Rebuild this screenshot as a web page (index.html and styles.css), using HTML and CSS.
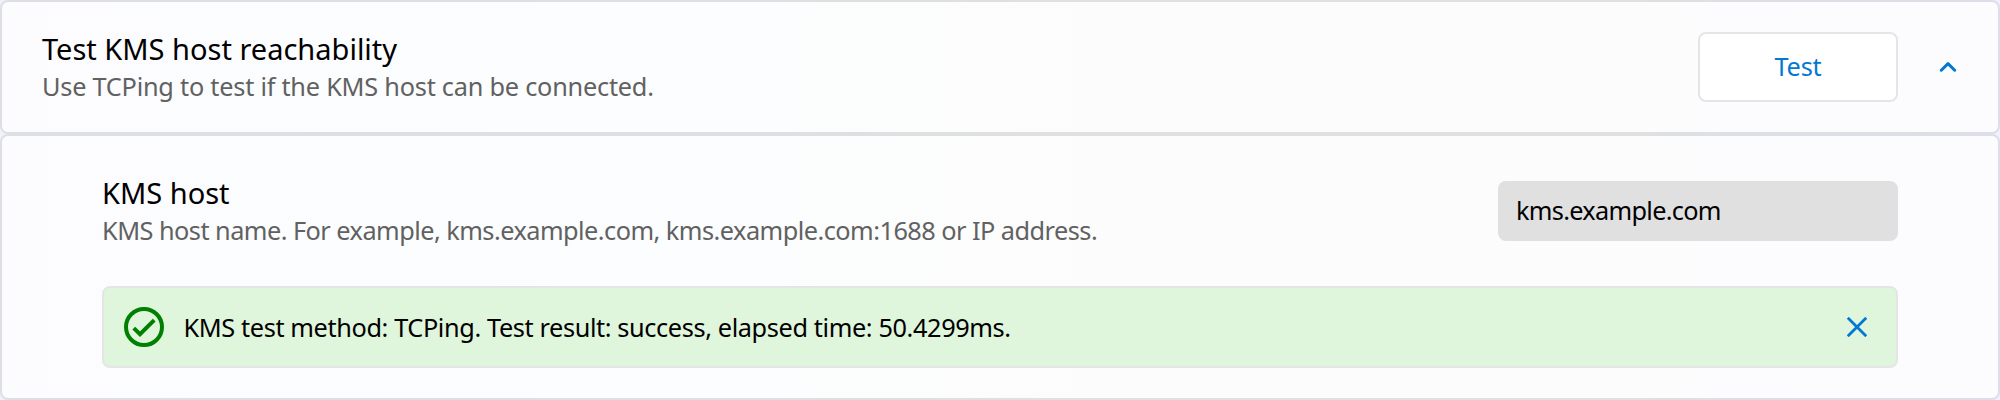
FILE: index.html
```
<!DOCTYPE html>
<html lang="en">
<head>
<meta charset="utf-8">
<title>Test KMS host reachability</title>
<link rel="stylesheet" href="styles.css">
</head>
<body>
<main class="page">
  <section class="card card-header">
    <div class="text">
      <h1 class="title">Test KMS host reachability</h1>
      <p class="description">Use TCPing to test if the KMS host can be connected.</p>
    </div>
    <button class="test-button" type="button">Test</button>
    <button class="expander" type="button" aria-label="Collapse">
      <svg width="20" height="14" viewBox="0 0 20 14"><path d="M3.3 10.2 10 3.6l6.7 6.6" fill="none" stroke="#0078d4" stroke-width="3" stroke-linecap="round" stroke-linejoin="round"/></svg>
    </button>
  </section>
  <section class="card card-body">
    <div class="row">
      <div class="text">
        <h2 class="title">KMS host</h2>
        <p class="description host-description">KMS host name. For example, kms.example.com, kms.example.com:1688 or IP address.</p>
      </div>
      <div class="host-input">kms.example.com</div>
    </div>
    <div class="info-bar">
      <svg width="40" height="40" viewBox="0 0 40 40" fill="none" stroke="#008000"><circle cx="20" cy="20" r="18" stroke-width="4"/><path d="M9.8 21.1 16 27.2 30.2 13.1" stroke-width="4"/></svg>
      <span class="message">KMS test method: TCPing. Test result: success, elapsed time: 50.4299ms.</span>
      <button class="close" type="button" aria-label="Close">
        <svg width="20" height="20" viewBox="0 0 20 20"><path d="M.8.8 19.2 19.2M19.2.8.8 19.2" fill="none" stroke="#0078d4" stroke-width="2.8"/></svg>
      </button>
    </div>
  </section>
</main>
</body>
</html>
```
FILE: styles.css
```
* { box-sizing: border-box; }
body {
  margin: 0;
  font-family: "Noto Sans", "Open Sans", sans-serif;
  font-size: 25.3px;
  color: #000;
}
.page {
  height: 400px;
  display: grid;
  grid-template-rows: 134px 266px;
  background: linear-gradient(90deg, #eff3f9, #eef4f9 35%, #f3f3f3 55%, #f3f3f3 75%, #eff3f9 88%, #f0f1fb);
}
.card {
  border: 2px solid rgba(0, 0, 0, 0.08);
  border-radius: 8px;
  background: rgba(255, 255, 255, 0.77) padding-box;
}
.card-header {
  display: flex;
  align-items: center;
  padding: 0 39.5px 0 40px;
}
.text { flex: 1; }
.title {
  margin: 0;
  font-size: 29px;
  line-height: 38px;
  font-weight: 400;
}
.description {
  margin: 0;
  line-height: 36px;
  letter-spacing: -0.235px;
  color: #616161;
  white-space: nowrap;
}
.host-description { letter-spacing: -0.53px; }
button {
  padding: 0;
  border: 0;
  background: none;
  font: inherit;
  color: #0078d4;
}
.test-button {
  width: 200px;
  height: 70px;
  padding-bottom: 2px;
  border: 2px solid #e5e5e5;
  border-radius: 8px;
  background: #fff;
  letter-spacing: -0.2px;
}
.expander {
  display: flex;
  margin-left: 40px;
  margin-right: 0.5px;
}
.card-body { padding: 37px 100px 0; }
.row {
  display: flex;
  align-items: center;
  height: 76px;
}
.host-input {
  width: 400px;
  height: 60px;
  padding-left: 18px;
  border-radius: 8px;
  background: #e0e0e0;
  line-height: 59px;
  letter-spacing: -0.7px;
}
.info-bar {
  display: flex;
  align-items: center;
  height: 82px;
  margin-top: 37px;
  padding: 0 29px 0 20px;
  border: 2px solid #e5e5e7;
  border-radius: 8px;
  background: #dff5dc;
}
.message {
  flex: 1;
  margin-left: 19.5px;
  padding-bottom: 1px;
  letter-spacing: -0.385px;
}
.close { display: flex; }
svg { display: block; }
```
